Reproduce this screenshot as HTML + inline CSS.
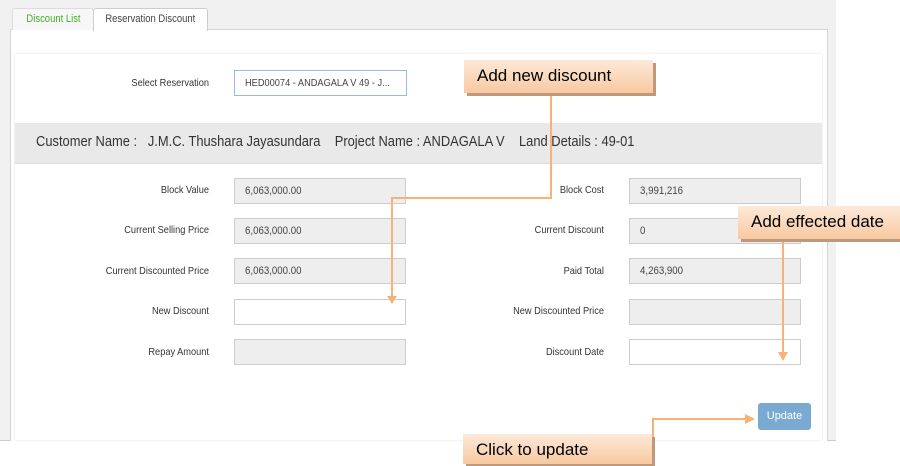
<!DOCTYPE html>
<html><head><style>
body{margin:0;width:900px;height:462px;overflow:hidden;background:#fff;font-family:"Liberation Sans",sans-serif;position:relative}
.bg{position:absolute;left:0;top:0;width:836px;height:440px;background:#f1f1f1;border-bottom:1px solid #ccc}
.panel{position:absolute;left:10px;top:29px;width:816px;height:411px;background:#fff;border:1px solid #d4d4d4;border-bottom:none}
.tab{position:absolute;top:8px;height:21px;font-size:11px;line-height:21px;text-align:center;border:1px solid #ccc;border-bottom:none;border-radius:3px 3px 0 0}
.tab span{display:inline-block;transform:scaleX(.86);white-space:nowrap}
.card{position:absolute;left:15px;top:54px;width:807px;height:386px;background:#fff;box-shadow:0 0 2px #ddd}
.lbl{position:absolute;font-size:10.5px;color:#333;text-align:right;width:180px;transform:scaleX(.88);transform-origin:right}
.inp{position:absolute;width:172px;height:26px;border:1px solid #ccc;box-sizing:border-box;font-size:11px;line-height:24px;padding-left:10px;color:#444;white-space:nowrap;overflow:hidden}
.inp span{display:inline-block;transform:scaleX(.88);transform-origin:left}
.g{background:#eee}
.bar{position:absolute;left:15px;top:123px;width:807px;height:40px;background:#e9e9e9;border-bottom:1px solid #ddd;font-size:15px;line-height:38px;color:#333}
.co{position:absolute;background:linear-gradient(#fde9d9,#f8c9a0);box-shadow:3px 3px 0 #c0997a;font-size:17px;color:#000;line-height:32px;padding-left:13px;box-sizing:border-box}
</style></head><body>
<div class="bg"></div>
<div class="panel"></div>
<div class="tab" style="left:12px;width:80px;color:#3cb321;background:#f7f7f7;border-color:#ddd"><span>Discount List</span></div>
<div class="tab" style="left:93px;width:113px;background:#fff;color:#444;height:22px"><span>Reservation Discount</span></div>
<div class="card"></div>
<div class="lbl" style="left:29px;top:77px">Select Reservation</div>
<div class="inp" style="left:234px;top:70px;border-color:#9cb9e0;width:173px;font-size:10.5px"><span>HED00074 - ANDAGALA V 49 - J...</span></div>
<div class="bar"><span style="margin-left:21px;display:inline-block;transform:scaleX(.86);transform-origin:left;white-space:nowrap">Customer Name :&nbsp;&nbsp; J.M.C. Thushara Jayasundara &nbsp;&nbsp; Project Name : ANDAGALA V &nbsp;&nbsp; Land Details : 49-01</span></div>

<div class="lbl" style="left:29px;top:184px">Block Value</div><div class="inp g" style="left:234px;top:178px"><span>6,063,000.00</span></div>
<div class="lbl" style="left:29px;top:224px">Current Selling Price</div><div class="inp g" style="left:234px;top:218px"><span>6,063,000.00</span></div>
<div class="lbl" style="left:29px;top:265px">Current Discounted Price</div><div class="inp g" style="left:234px;top:258px"><span>6,063,000.00</span></div>
<div class="lbl" style="left:29px;top:305px">New Discount</div><div class="inp" style="left:234px;top:299px"></div>
<div class="lbl" style="left:29px;top:346px">Repay Amount</div><div class="inp g" style="left:234px;top:339px"></div>

<div class="lbl" style="left:424px;top:184px">Block Cost</div><div class="inp g" style="left:629px;top:178px"><span>3,991,216</span></div>
<div class="lbl" style="left:424px;top:224px">Current Discount</div><div class="inp g" style="left:629px;top:218px"><span>0</span></div>
<div class="lbl" style="left:424px;top:265px">Paid Total</div><div class="inp g" style="left:629px;top:258px"><span>4,263,900</span></div>
<div class="lbl" style="left:424px;top:305px">New Discounted Price</div><div class="inp g" style="left:629px;top:299px"></div>
<div class="lbl" style="left:424px;top:346px">Discount Date</div><div class="inp" style="left:629px;top:339px"></div>

<div style="position:absolute;left:758px;top:403px;width:53px;height:27px;background:#7aa9d2;border-radius:3px;color:#fff;font-size:11px;text-align:center;line-height:27px">Update</div>

<svg style="position:absolute;left:0;top:0" width="900" height="462">
<g stroke="#f7b27a" stroke-width="2" fill="none">
<polyline points="551,95 551,198 392,198 392,296"/>
<polyline points="783,240 783,354"/>
<polyline points="552,440 653,440 653,419 748,419"/>
</g>
<g fill="#f7b27a">
<polygon points="387,296 397,296 392,304"/>
<polygon points="778,352 788,352 783,361"/>
<polygon points="745,414 745,424 755,419"/>
</g>
</svg>
<div class="co" style="left:464px;top:60px;width:189px;height:33px">Add new discount</div>
<div class="co" style="left:738px;top:206px;width:162px;height:33px">Add effected date</div>
<div class="co" style="left:463px;top:434px;width:189px;height:30px;line-height:32px">Click to update</div>
</body></html>
